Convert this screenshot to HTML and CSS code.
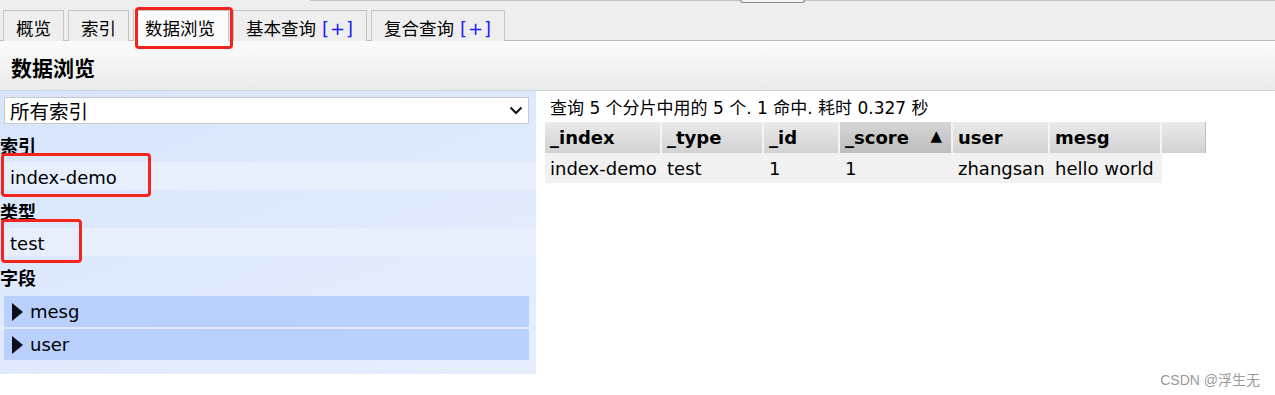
FILE: index.html
```html
<!DOCTYPE html>
<html lang="zh">
<head>
<meta charset="utf-8">
<title>数据浏览</title>
<link rel="stylesheet" href="styles.css">
</head>
<body>
<div class="page">
  <div class="topbar">
    <div class="topstrip"><div class="topline"><div class="btn-edge"></div></div></div>
    <div class="tabs">
      <div class="tab">概览</div>
      <div class="tab">索引</div>
      <div class="tab active">数据浏览</div>
      <div class="tab">基本查询 <span class="plus">[+]</span></div>
      <div class="tab">复合查询 <span class="plus">[+]</span></div>
    </div>
  </div>
  <div class="header">数据浏览</div>
  <div class="main">
    <div class="side">
      <div class="select"><span>所有索引</span>
        <svg class="chev" width="14" height="9" viewBox="0 0 14 9"><path d="M1.5 1.5 L7 7 L12.5 1.5" fill="none" stroke="#111" stroke-width="2"/></svg>
      </div>
      <div class="label">索引</div>
      <div class="item">index-demo</div>
      <div class="label">类型</div>
      <div class="item">test</div>
      <div class="label fields-label">字段</div>
      <div class="field"><span class="tri"></span>mesg</div>
      <div class="field"><span class="tri"></span>user</div>
    </div>
    <div class="results">
      <div class="summary">查询 5 个分片中用的 5 个. 1 命中. 耗时 0.327 秒</div>
      <table class="grid">
        <thead>
          <tr>
            <th class="c1">_index</th>
            <th class="c2">_type</th>
            <th class="c3">_id</th>
            <th class="c4 sorted">_score <span class="arrow">▲</span></th>
            <th class="c5">user</th>
            <th class="c6">mesg</th>
            <th class="c7"></th>
          </tr>
        </thead>
        <tbody>
          <tr>
            <td>index-demo</td>
            <td>test</td>
            <td>1</td>
            <td>1</td>
            <td>zhangsan</td>
            <td>hello world</td>
            <td class="blank"></td>
          </tr>
        </tbody>
      </table>
    </div>
  </div>
  <div class="mark m1"></div>
  <div class="mark m2"></div>
  <div class="mark m3"></div>
  <div class="watermark">CSDN @浮生无</div>
</div>
</body>
</html>
```

FILE: styles.css
```css
html, body {
  margin: 0;
  padding: 0;
  background: #ffffff;
}
.page {
  position: relative;
  width: 1275px;
  height: 395px;
  overflow: hidden;
  font-family: "DejaVu Sans", "Noto Sans CJK SC", sans-serif;
  font-size: 18px;
  color: #000;
}
.topbar {
  background: #eeeeee;
  height: 40px;
  border-bottom: 1px solid #bdbdbd;
  display: flex;
  flex-direction: column;
}
.topstrip {
  height: 10px;
}
.topline {
  margin-left: 310px;
  border-top: 1px solid #c4c4c4;
  height: 0;
}
.btn-edge {
  margin-left: 430px;
  width: 63px;
  height: 2px;
  border: 1px solid #8a8a8a;
  border-top: none;
  border-radius: 0 0 3px 3px;
  background: #f4f4f4;
  margin-top: -1px;
}
.tabs {
  display: flex;
  gap: 4px;
  padding-left: 3px;
  height: 30px;
}
.tab {
  box-sizing: border-box;
  height: 31px;
  padding: 6px 12px 0;
  border: 1px solid #c4c4c4;
  border-bottom: none;
  background: #eeeeee;
  font-family: "Noto Sans CJK SC", "DejaVu Sans", sans-serif;
  font-size: 17.5px;
  line-height: 22px;
  white-space: nowrap;
}
.tab.active {
  background: #fbfbfb;
  position: relative;
  z-index: 1;
  width: 96px;
  padding-left: 11px;
}
.plus {
  color: #1a1aff;
  font-family: "DejaVu Sans", sans-serif;
  font-size: 18px;
  letter-spacing: 1px;
  margin-left: 2px;
}
.header {
  height: 50px;
  box-sizing: border-box;
  padding: 11px 11px 0;
  background: linear-gradient(#fbfbfb, #e9eaea);
  border-bottom: 1px solid #cfd6e0;
  font-family: "Noto Sans CJK SC", sans-serif;
  font-weight: bold;
  font-size: 21px;
  line-height: 30px;
}
.main {
  display: flex;
  gap: 9px;
}
.side {
  width: 536px;
  height: 283px;
  box-sizing: border-box;
  padding: 6px 0 0 4px;
  background: linear-gradient(160deg, #d7e5fc 0%, #e6eefd 100%);
  display: flex;
  flex-direction: column;
}
.select {
  width: 525px;
  height: 27px;
  box-sizing: border-box;
  background: #fff;
  border: 1px solid #c9c9c9;
  display: flex;
  align-items: center;
  justify-content: space-between;
  padding: 0 5px 0 5px;
  font-family: "Noto Sans CJK SC", sans-serif;
  font-size: 19.5px;
}
.label {
  font-family: "Noto Sans CJK SC", sans-serif;
  font-weight: bold;
  font-size: 18px;
  line-height: 24px;
  height: 38px;
  padding-top: 9px;
  box-sizing: border-box;
  margin-left: -4px;
}
.item {
  height: 28px;
  line-height: 31px;
  padding-left: 6px;
  background: #e7effd;
  font-size: 18px;
}
.fields-label {
  height: 40px;
  padding-top: 9px;
}
.field {
  width: 525px;
  height: 31px;
  box-sizing: border-box;
  background: #b9cffc;
  display: flex;
  align-items: center;
  padding-left: 8px;
  margin-bottom: 2px;
  font-size: 18px;
}
.tri {
  width: 0;
  height: 0;
  border-top: 9px solid transparent;
  border-bottom: 9px solid transparent;
  border-left: 11px solid #0d0d1a;
  margin-right: 7px;
}
.results {
  padding-top: 5px;
}
.summary {
  height: 26px;
  line-height: 24px;
  padding-left: 5px;
  font-size: 17px;
}
.grid {
  border-collapse: separate;
  border-spacing: 0;
}
.grid th {
  height: 31px;
  box-sizing: border-box;
  padding: 0 5px;
  text-align: left;
  font-weight: bold;
  font-size: 18px;
  background: linear-gradient(#eaeaea, #d2d2d2);
  border-right: 2px solid #f4f4f4;
  white-space: nowrap;
}
.grid th.sorted {
  background: linear-gradient(#d6d6d6, #bdbdbd);
}
.grid th.c7 {
  border-right: 1px solid #bbb;
}
.arrow {
  float: right;
  font-size: 15px;
  margin-right: 4px;
}
.c1 { width: 117px; }
.c2 { width: 102px; }
.c3 { width: 76px; }
.c4 { width: 113px; }
.c5 { width: 97px; }
.c6 { width: 112px; }
.c7 { width: 44px; }
.grid td {
  height: 30px;
  box-sizing: border-box;
  padding: 0 5px;
  background: #f1f1f1;
  white-space: nowrap;
  font-size: 18px;
}
.grid td.blank {
  background: transparent;
}
.mark {
  position: absolute;
  border: 3px solid #f5231d;
  border-radius: 4px;
  box-sizing: border-box;
  z-index: 5;
}
.m1 { left: 135px; top: 7px; width: 98px; height: 42px; }
.m2 { left: 1px; top: 153px; width: 150px; height: 44px; }
.m3 { left: 1px; top: 219px; width: 81px; height: 44px; }
.watermark {
  position: absolute;
  right: 15px;
  bottom: 6px;
  color: #9a9a9a;
  font-family: "Liberation Sans", "Noto Sans CJK SC", sans-serif;
  font-size: 14px;
}
```
